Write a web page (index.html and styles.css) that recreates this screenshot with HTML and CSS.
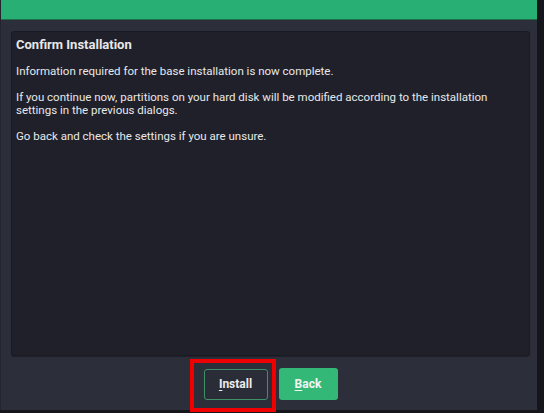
FILE: index.html
```html
<!DOCTYPE html>
<html lang="en">
<head>
    <meta charset="UTF-8">
    <meta name="viewport" content="width=device-width, initial-scale=1.0">
    <title>Confirm Installation</title>
    <link rel="stylesheet" href="styles.css">
</head>
<body>
    <div class="window">
        <div class="titlebar"></div>
        <div class="content">
            <div class="panel">
                <h1>Confirm Installation</h1>
                <p>Information required for the base installation is now complete.</p>
                <p>If you continue now, partitions on your hard disk will be modified according to the installation settings in the previous dialogs.</p>
                <p>Go back and check the settings if you are unsure.</p>
            </div>
            <div class="actions">
                <span class="highlight">
                    <button class="btn btn-outline"><u>I</u>nstall</button>
                </span>
                <button class="btn btn-primary"><u>B</u>ack</button>
            </div>
        </div>
    </div>
</body>
</html>
```

FILE: styles.css
```css
body {
    margin: 0;
    background-color: #15161b;
    font-family: Roboto, 'Liberation Sans', sans-serif;
    width: 544px;
    height: 413px;
    overflow: hidden;
}
.window {
    width: 537px;
    height: 410px;
    background-color: #2c2e3a;
    border-left: 1px solid #23242d;
    display: flex;
    flex-direction: column;
    box-sizing: border-box;
}
.titlebar {
    height: 19px;
    background-color: #28b074;
    border-bottom: 1px solid #1f6e4b;
    flex-shrink: 0;
}
.content {
    flex: 1;
    display: flex;
    flex-direction: column;
    padding: 11px 7px 0 10px;
}
.panel {
    height: 325px;
    background-color: #1f2029;
    border: 1px solid #1a1b22;
    border-radius: 3px;
    box-shadow: 0 1px 1px rgba(0, 0, 0, 0.3);
    padding: 5px 4px;
    box-sizing: border-box;
    color: #e8e8ea;
}
.panel h1 {
    font-size: 13px;
    font-weight: bold;
    margin: 0 0 12px 0;
    line-height: 16px;
}
.panel p {
    font-size: 11.5px;
    line-height: 13px;
    margin: 0 0 13px 0;
}
.actions {
    display: flex;
    justify-content: center;
    align-items: center;
    gap: 11px;
    margin-top: 12px;
}
.highlight {
    position: relative;
    display: flex;
}
.highlight::after {
    content: '';
    position: absolute;
    top: -10px;
    bottom: -12px;
    left: -14px;
    right: -8px;
    border: 4px solid #f00000;
    pointer-events: none;
}
.btn {
    font-family: Roboto, 'Liberation Sans', sans-serif;
    font-size: 12px;
    font-weight: bold;
    color: #ececec;
    height: 31px;
    border-radius: 3px;
    cursor: pointer;
    padding: 0;
}
.btn u {
    text-decoration-thickness: 1px;
    text-underline-offset: 2px;
}
.btn-outline {
    width: 64px;
    background-color: #2a2c38;
    border: 1px solid #3f8f68;
}
.btn-primary {
    width: 59px;
    height: 32px;
    background-color: #33b878;
    border: none;
    color: #f4f4f4;
}
```
